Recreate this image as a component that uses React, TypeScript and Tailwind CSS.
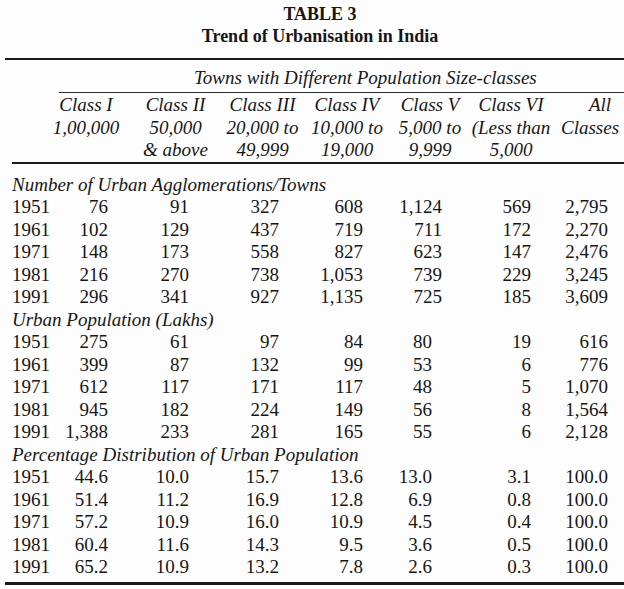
import React from "react";

type Section = { label: string; rows: string[][]; c5pad?: boolean };

const sections: Section[] = [
  {
    label: "Number of Urban Agglomerations/Towns",
    rows: [
      ["1951", "76", "91", "327", "608", "1,124", "569", "2,795"],
      ["1961", "102", "129", "437", "719", "711", "172", "2,270"],
      ["1971", "148", "173", "558", "827", "623", "147", "2,476"],
      ["1981", "216", "270", "738", "1,053", "739", "229", "3,245"],
      ["1991", "296", "341", "927", "1,135", "725", "185", "3,609"],
    ],
  },
  {
    label: "Urban Population (Lakhs)",
    c5pad: true,
    rows: [
      ["1951", "275", "61", "97", "84", "80", "19", "616"],
      ["1961", "399", "87", "132", "99", "53", "6", "776"],
      ["1971", "612", "117", "171", "117", "48", "5", "1,070"],
      ["1981", "945", "182", "224", "149", "56", "8", "1,564"],
      ["1991", "1,388", "233", "281", "165", "55", "6", "2,128"],
    ],
  },
  {
    label: "Percentage Distribution of Urban Population",
    c5pad: true,
    rows: [
      ["1951", "44.6", "10.0", "15.7", "13.6", "13.0", "3.1", "100.0"],
      ["1961", "51.4", "11.2", "16.9", "12.8", "6.9", "0.8", "100.0"],
      ["1971", "57.2", "10.9", "16.0", "10.9", "4.5", "0.4", "100.0"],
      ["1981", "60.4", "11.6", "14.3", "9.5", "3.6", "0.5", "100.0"],
      ["1991", "65.2", "10.9", "13.2", "7.8", "2.6", "0.3", "100.0"],
    ],
  },
];

const headers: string[][] = [
  ["Class I", "1,00,000", ""],
  ["Class II", "50,000", "& above"],
  ["Class III", "20,000 to", "49,999"],
  ["Class IV", "10,000 to", "19,000"],
  ["Class V", "5,000 to", "9,999"],
  ["Class VI", "(Less than", "5,000"],
  ["All", "Classes", ""],
];

export default function App() {
  return (
    <div
      className="w-[624px] h-[589px] overflow-hidden bg-[#fdfdfd] text-[#161616]"
      style={{ fontFamily: '"Liberation Serif", "Times New Roman", serif' }}
    >
      {/* Title */}
      <div className="pt-[3px] pl-[16px] text-center font-bold text-[18px]">
        <div className="leading-[22px]">TABLE 3</div>
        <div className="leading-[23px]">Trend of Urbanisation in India</div>
      </div>

      {/* top rule */}
      <div className="mt-[10px] ml-[5px] h-[2px] bg-[#1a1a1a]" />

      {/* spanning header */}
      <div className="pt-[7px] pl-[194px] italic text-[19px] leading-[22px] whitespace-nowrap">
        Towns with Different Population Size-classes
      </div>
      <div className="mt-[3px] ml-[59px] h-[1px] bg-[#2a2a2a]" />

      {/* column headers */}
      <div className="mt-[1px] ml-[41px] grid grid-cols-[90px_89px_85px_84px_82px_80px_78px] italic text-[19px] leading-[22.5px] text-center whitespace-nowrap">
        {headers.map((h, i) => (
          <div key={i} className="flex flex-col">
            <div className={i === 6 ? "h-[22.5px] pl-[20px]" : "h-[22.5px]"}>{h[0]}</div>
            <div className="h-[22.5px]">{h[1]}</div>
            <div className="h-[22.5px]">{h[2]}</div>
          </div>
        ))}
      </div>

      <div className="ml-[12px] h-[2px] bg-[#1a1a1a]" />

      {/* body */}
      <div className="mt-[10px] text-[19px] leading-[22.5px]">
        {sections.map((s, si) => (
          <div key={si}>
            <div className="pl-[12px] italic h-[22.5px] whitespace-nowrap">{s.label}</div>
            {s.rows.map((r, ri) => (
              <div
                key={ri}
                className="pl-[12px] h-[22.5px] grid grid-cols-[38px_58px_81px_90px_84px_79px_89px_77px] whitespace-nowrap"
              >
                {r.map((c, ci) => (
                  <div
                    key={ci}
                    className={
                      ci === 0
                        ? "text-left"
                        : ci === 5 && s.c5pad
                        ? "text-right pr-[10px]"
                        : "text-right"
                    }
                  >
                    {c}
                  </div>
                ))}
              </div>
            ))}
          </div>
        ))}
      </div>

      {/* bottom rule */}
      <div className="mt-[3px] ml-[5px] h-[3px] bg-[#1a1a1a]" />
    </div>
  );
}
